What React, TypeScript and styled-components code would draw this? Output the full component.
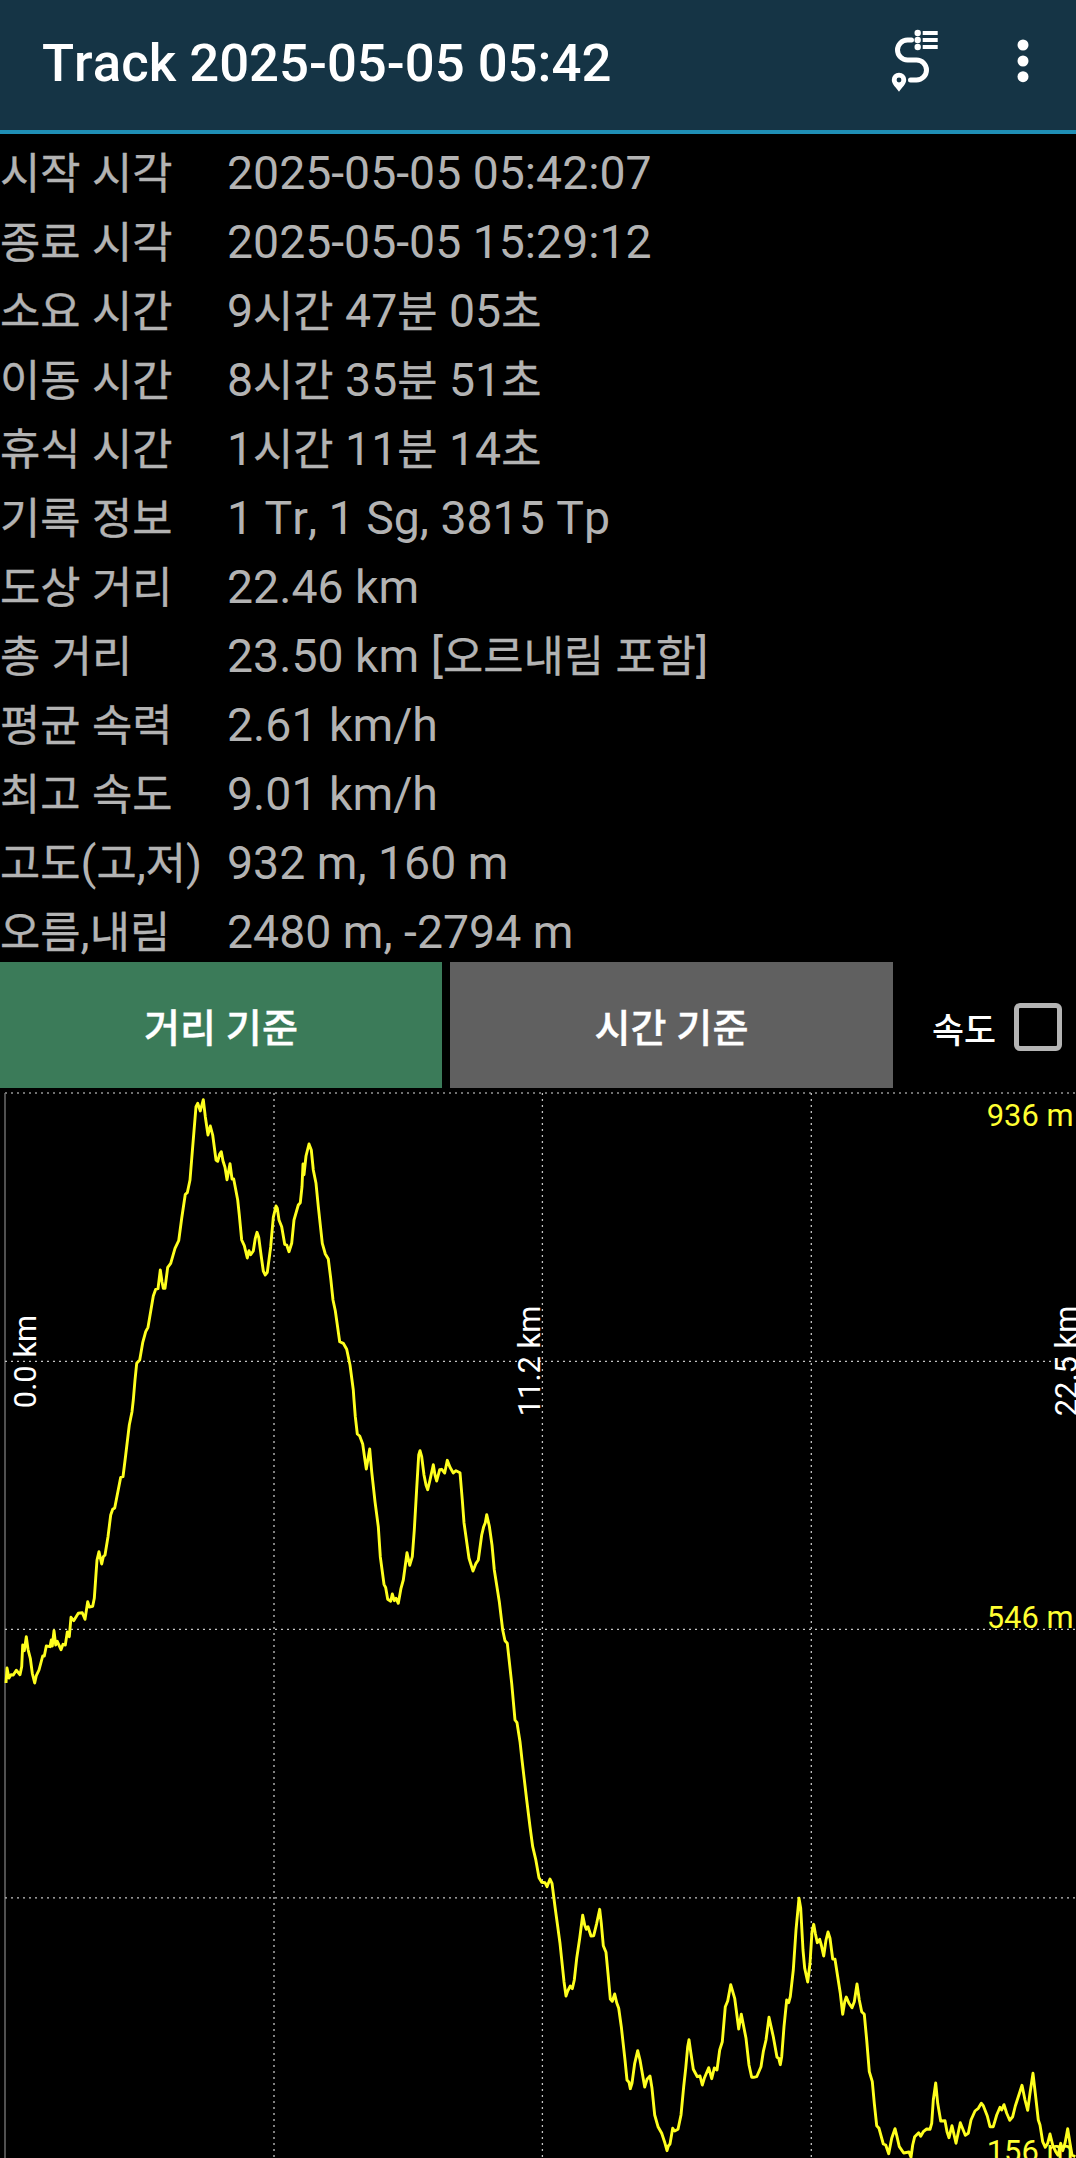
import React from 'react';
import styled, { createGlobalStyle } from 'styled-components';

const GlobalStyle = createGlobalStyle`
  body {
    margin: 0;
    background: #000;
  }
  * {
    box-sizing: border-box;
  }
`;

const FONT = `Roboto, 'Noto Sans CJK KR', sans-serif`;

const Screen = styled.div`
  display: flex;
  flex-direction: column;
  width: 1076px;
  height: 2158px;
  overflow: hidden;
  background: #000;
  font-family: ${FONT};
  font-kerning: none;
`;

const AppBar = styled.header`
  display: flex;
  align-items: center;
  flex: none;
  height: 134px;
  padding: 0 29px 8px 42px;
  background: #153445;
  border-bottom: 4px solid #1f8fb6;
`;

const Title = styled.h1`
  flex: 1;
  margin: 0;
  padding-top: 3px;
  color: #fff;
  font-size: 52.7px;
  font-weight: 500;
  line-height: 64px;
  white-space: pre;
`;

const AppBarActions = styled.div`
  display: flex;
  align-items: center;
  gap: 39px;
`;

const IconButton = styled.button<{ $width: number }>`
  display: flex;
  align-items: center;
  justify-content: center;
  width: ${(p) => p.$width}px;
  height: 80px;
  padding: 0;
  border: 0;
  background: none;
`;

const Stats = styled.dl`
  flex: none;
  margin: 0;
`;

const StatRow = styled.div`
  display: grid;
  grid-template-columns: 227px 1fr;
  height: 69px;
  color: #b3b3b3;
  font-size: 46.4px;
  line-height: 78px;
  white-space: pre;
`;

const StatLabel = styled.dt`
  margin: 0;
`;

const StatValue = styled.dd`
  margin: 0;
`;

const HangulRun = styled.span`
  font-size: 0.943em;
  line-height: 0;
  -webkit-text-stroke: 0.35px currentColor;
`;

const Controls = styled.div`
  display: flex;
  flex: none;
  height: 126px;
`;

const ModeButton = styled.button<{ $active?: boolean }>`
  flex: none;
  width: ${(p) => (p.$active ? 442 : 443)}px;
  margin: 0 8px 0 0;
  padding: 9px 0 0;
  border: 0;
  background: ${(p) => (p.$active ? '#3b7b59' : '#606060')};
  color: #fff;
  font-family: ${FONT};
  font-size: 39.2px;
  font-weight: 500;
  line-height: 117px;
  -webkit-text-stroke: 0.35px currentColor;
`;

const SpeedToggle = styled.label`
  display: flex;
  flex: 1;
  align-items: center;
  justify-content: flex-end;
  gap: 18px;
  padding-right: 14px;
  color: #fff;
  font-size: 34.8px;
  font-weight: 500;
`;

const SpeedText = styled.span`
  padding-top: 5px;
`;

const CheckBox = styled.span`
  width: 48px;
  height: 48px;
  margin-top: 4px;
  border: 5px solid #b4b4b4;
  border-radius: 6px;
`;

const ChartSvg = styled.svg`
  display: block;
  flex: none;
  font-family: ${FONT};
  font-size: 30.9px;
`;

const ROWS: [string, string][] = [
  ['시작 시각', '2025-05-05 05:42:07'],
  ['종료 시각', '2025-05-05 15:29:12'],
  ['소요 시간', '9시간 47분 05초'],
  ['이동 시간', '8시간 35분 51초'],
  ['휴식 시간', '1시간 11분 14초'],
  ['기록 정보', '1 Tr, 1 Sg, 3815 Tp'],
  ['도상 거리', '22.46 km'],
  ['총 거리', '23.50 km [오르내림 포함]'],
  ['평균 속력', '2.61 km/h'],
  ['최고 속도', '9.01 km/h'],
  ['고도(고,저)', '932 m, 160 m'],
  ['오름,내림', '2480 m, -2794 m'],
];

// Elevation profile, one "x,y" pair per sample, in screen pixels.
const PROFILE = `
6,1683 7,1668 9,1678 11,1674.7 13.3,1675 16.3,1670.3 20,1674.7 21.7,1666.7 22.7,1645 24.3,1650.7 26.3,1636.7
28,1649.3 30.3,1658.3 32.3,1673.3 34.7,1683 36.3,1675.7 39,1670 42.7,1656 44.3,1656 46.3,1646 50,1646.7
51.3,1640 52.3,1646 54,1630.7 55.7,1645 57.3,1641.3 61,1649.7 63,1644.3 65.3,1645 67.3,1632 69.3,1636.7
71,1617.3 73.7,1620.7 78.3,1613.3 82.3,1612.7 85,1619.3 87.7,1601.7 89.3,1607 92.7,1606.3 94.3,1598.3
95.7,1578.3 97,1560 99,1551.7 101.7,1564 103.3,1556.7 105,1555 108,1536.7 110.7,1515 112.7,1509.3
114.7,1508 120.7,1477.3 123,1476.7 125.7,1455 129.3,1425 132,1411.7 133.3,1400 135,1380 136.7,1363.3
139.7,1360 142.7,1342.7 145.7,1331.7 148,1327.3 153.3,1296 155.7,1289.3 158,1288.7 160.3,1270 162,1281.7
163.3,1288.3 165,1288.3 167.7,1267.3 170.7,1263.3 175,1248.3 178.7,1240.7 181.7,1218.3 185.3,1194.3
187.3,1192.7 190,1180 192.3,1151.7 196,1106.7 197.7,1103.3 200.3,1111 203.3,1099.7 205.3,1116.7 208,1135
210.3,1126 212.7,1135 216,1160 217.7,1161.3 219.7,1154 221.3,1151.7 223,1161 225,1167.3 227,1179.7
230,1163.7 232,1179 233.7,1179 237.7,1200 239.3,1215 241.7,1240 244.3,1245.7 247.3,1258 249,1250.7
250.7,1254.7 253.3,1251 255.3,1238.3 257,1232.3 258.7,1237.3 261.3,1256.7 263.3,1271 265.3,1275
267.3,1272.3 270.7,1246.7 273.3,1217.3 276,1206 277.3,1208.3 279,1220 281.7,1226.7 284.7,1244.3 286.7,1245
289,1251.7 291.7,1243.3 294,1220 298.3,1205 300.3,1202.7 302,1186.7 303,1164 304,1174.7 306,1156 309,1144
311.3,1150 313.3,1170 316,1183.3 318.3,1206.7 322.3,1243.3 325.3,1254 328.3,1259 330.7,1278.3 333,1300
335.3,1310.7 339.7,1341.7 343.3,1343.3 346.7,1349.3 350,1365 353.3,1390 354,1400 355.3,1416.7 357.3,1434
359.7,1436 362.7,1444 364.7,1458.3 366.3,1469 369.7,1449 371.7,1471.7 375,1501.7 378.3,1526.7 380.3,1556.7
384,1584.3 385.7,1587.7 387.7,1599.3 390.7,1601.3 392.3,1594 394.3,1600.7 396,1598.3 398.3,1603.3
401,1588.3 403.3,1580 407,1552.7 409.7,1565.3 412.3,1556.7 414.3,1530 416.7,1488.3 418.7,1455 420,1450.7
421.7,1456.7 424,1475 426,1485 427.7,1489.7 430,1480 433.3,1464.7 435,1475 436.7,1481 439.7,1469.7
441.7,1469.3 444.7,1473 447.3,1460.3 450,1467.3 453.3,1473 456,1470.7 460,1472.7 462.3,1500 464,1522.7
469,1558.3 473,1571 476,1563.3 478.3,1560 481.7,1535 483.7,1526.7 485.3,1522.7 486.7,1514.7 489.3,1526
492,1545 494.3,1570 499.3,1601.7 502.7,1630 505,1640.7 507.3,1643.3 511.7,1683.3 515,1720 517,1722.7
520,1741.7 522,1760 526.7,1800 530,1826.7 532.7,1846.7 535.7,1859.3 539,1877.7 541.7,1882.3 545,1882.7
547,1886.7 550,1879 552,1883.3 555,1906.7 560,1943.3 564,1981.7 566,1996 567.7,1991 570.3,1986
572.3,1988.7 574.3,1980 576.7,1958.3 579.7,1938.3 582.7,1915.3 584.7,1925 586.3,1929.3 588,1926.7 591,1936
593.7,1935.7 596.7,1923.3 599.7,1909.3 601.3,1923.3 603.3,1945.7 606,1952.3 608.3,1976.7 610.3,1999
612.3,2001.3 614.7,1994 616.7,2002.7 618.7,2008.3 621.3,2026.7 625,2060 627,2080 629,2082.3 630.3,2088.7
632,2083.3 634.7,2063.3 637.7,2050.7 640,2060 644.7,2087 647,2079.3 650,2076 652,2088.3 654.7,2115
658,2126.7 661.7,2133.3 665,2143.3 667,2150.7 668.3,2146 670,2144 672.7,2128.3 674.7,2131 678,2129.3
681,2115 683.7,2086.7 685.7,2068.3 687.7,2046.7 689,2039.7 690.7,2051.7 693.3,2069.3 697.3,2076.7
700,2076 702.3,2085 704.3,2078.3 708.7,2067.7 711.7,2078.7 714.3,2068 717,2070 719.7,2050 722.3,2041.7
725.3,2006.7 727.7,2001 730.7,1984.7 734.7,1998.3 738.7,2029 741.3,2014.3 746,2038.3 749,2065 751.7,2077.3
753.7,2077.3 756.7,2076.7 761,2066.7 763.3,2051.7 766,2040 769,2017.3 773.3,2036.7 777,2057.3 778.7,2058.3
780.3,2064.7 781.7,2056.7 784,2026.7 786.7,2000 788.7,2002.7 790.3,1996.7 793.3,1970 796,1930 799,1898.3
800.7,1908.3 803,1950 804.7,1968.3 807.7,1982 810,1963.3 812,1931.7 813.7,1924.3 815.3,1933.3
817.3,1942.7 819.7,1939.3 821.3,1945 823.7,1956 826,1940 828,1932 830,1938.3 832.7,1959 835,1959.3
837.7,1976.7 840.3,1993.3 842.7,2014.3 844.7,2001.7 846.3,1997 849,2003.3 852,2007.7 854.3,2001.7
857,1984 859.3,2000 861.7,2011.7 864.3,2014.3 866.7,2040 869.3,2071.7 872.3,2081.7 874.3,2103.3
876.7,2125.7 879,2128.3 883.3,2144 885.7,2145 888.7,2153.7 891.7,2138.3 895,2128.7 897,2136.7 899.3,2146.7
903.7,2153 909,2152 911,2157.3 912.7,2145 914.7,2136.7 918.7,2132.7 920.7,2136.3 923.3,2131.7 926.7,2129
930,2129.3 931.7,2123.3 933.3,2100 935.7,2083 937.7,2103.3 940.7,2121 945,2120.7 947,2131.7 949,2137.7
952,2125.7 956,2143.3 960.3,2122.7 965.3,2135.3 968.3,2133.3 971,2120 975,2111 978.3,2108.3 981.3,2103.3
983.3,2105.7 987.3,2116 990,2126.7 993.3,2126.7 996.7,2115 1000,2107.3 1001.7,2110 1004,2104.7
1006.7,2113.3 1009.7,2120.3 1012.7,2116.7 1015.3,2106 1018.3,2096.7 1022,2085.3 1025,2100 1027.7,2110.3
1030,2093.3 1033,2073.3 1035.3,2093.3 1038.3,2120 1040,2125 1042.7,2141.7 1045.3,2147.3 1047.7,2143.3
1050,2134 1052.7,2145 1055.7,2151.7 1058,2155.3 1060.7,2143.3 1062.7,2150.7 1065,2143.3 1067.7,2128.7
1070,2143.3 1072,2155 1075.3,2156.7`;

// Hangul glyphs run a little smaller than the Latin digits next to them.
function MixedText({ text }: { text: string }) {
  return (
    <>
      {text.split(/([가-힣]+)/).map((part, i) =>
        i % 2 ? <HangulRun key={i}>{part}</HangulRun> : part
      )}
    </>
  );
}

function TrackIcon() {
  return (
    <svg width="48" height="64" viewBox="891 29 48 64" fill="none">
      <path
        d="M911.5 40H907.5a10 10 0 0 0 0 20H916.5a10 10 0 0 1 0 20H910.5"
        stroke="#fff"
        strokeWidth="5"
        strokeLinecap="round"
      />
      {[33, 40, 47].map((y) => (
        <g key={y} fill="#fff">
          <circle cx="917.7" cy={y} r="3.2" />
          <rect x="922.7" y={y - 2} width="15" height="4" />
        </g>
      ))}
      <path
        fill="#fff"
        fillRule="evenodd"
        d="M899 72.7a7.2 7.2 0 0 0-7.2 7.2c0 4.4 4.4 7.4 7.2 11.8 2.8-4.4 7.2-7.4 7.2-11.8a7.2 7.2 0 0 0-7.2-7.2zm0 4.9a2.4 2.4 0 1 1 0 4.8 2.4 2.4 0 0 1 0-4.8z"
      />
    </svg>
  );
}

function MoreIcon() {
  return (
    <svg width="12" height="44" viewBox="0 0 12 44" fill="#fff">
      <circle cx="6" cy="6" r="5.5" />
      <circle cx="6" cy="22" r="5.5" />
      <circle cx="6" cy="37.7" r="5.5" />
    </svg>
  );
}

function ElevationChart() {
  return (
    <ChartSvg width="1076" height="1070" viewBox="0 1088 1076 1070">
      <path d="M5 1093V2158" stroke="#505050" strokeWidth="2" />
      <path d="M5 1093H1076" stroke="#707070" strokeWidth="2" strokeDasharray="2 4" />
      <g stroke="#c4c4c4" strokeWidth="1.3" strokeDasharray="2 4">
        {[1361.3, 1629.4, 1897.9].map((y) => (
          <path key={y} d={`M5 ${y}H1076`} />
        ))}
        {[274, 542.4, 811.3].map((x) => (
          <path key={x} d={`M${x} 1093V2158`} />
        ))}
      </g>
      <g fill="#fff" textAnchor="middle">
        <text transform="translate(36 1361.5) rotate(-90)">0.0 km</text>
        <text transform="translate(540 1361) rotate(-90)">11.2 km</text>
        <text transform="translate(1076.5 1361) rotate(-90)">22.5 km</text>
      </g>
      <polyline
        points={PROFILE}
        fill="none"
        stroke="#ffff1e"
        strokeWidth="2.9"
        strokeLinejoin="round"
      />
      <g fill="#ffff32" textAnchor="end">
        <text x="1073.5" y="1126">936 m</text>
        <text x="1073.5" y="1628">546 m</text>
        <text x="1073.5" y="2161.5">156 m</text>
      </g>
    </ChartSvg>
  );
}

export default function App() {
  return (
    <Screen>
      <GlobalStyle />
      <AppBar>
        <Title>Track 2025-05-05 05:42</Title>
        <AppBarActions>
          <IconButton $width={90}>
            <TrackIcon />
          </IconButton>
          <IconButton $width={48}>
            <MoreIcon />
          </IconButton>
        </AppBarActions>
      </AppBar>
      <Stats>
        {ROWS.map(([label, value]) => (
          <StatRow key={label}>
            <StatLabel>
              <MixedText text={label} />
            </StatLabel>
            <StatValue>
              <MixedText text={value} />
            </StatValue>
          </StatRow>
        ))}
      </Stats>
      <Controls>
        <ModeButton $active>거리 기준</ModeButton>
        <ModeButton>시간 기준</ModeButton>
        <SpeedToggle>
          <SpeedText>속도</SpeedText>
          <CheckBox />
        </SpeedToggle>
      </Controls>
      <ElevationChart />
    </Screen>
  );
}
